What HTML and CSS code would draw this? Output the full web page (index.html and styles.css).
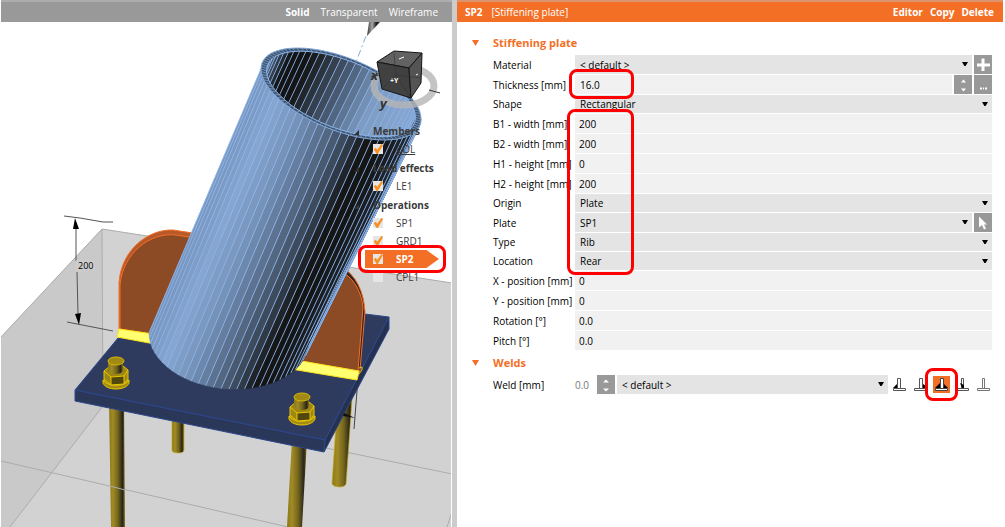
FILE: index.html
```html
<!DOCTYPE html>
<html lang="en">
<head>
<meta charset="utf-8">
<title>Stiffening plate</title>
<link rel="stylesheet" href="styles.css">
</head>
<body>
<div class="app">
  <section class="view">
    <header class="bar view-bar">
      <button class="bar-button strong" type="button">Solid</button>
      <button class="bar-button" type="button">Transparent</button>
      <button class="bar-button" type="button">Wireframe</button>
    </header>
    <div class="scene">
      <svg class="scene-art" viewBox="0 22 452 505" preserveAspectRatio="xMinYMin slice" aria-label="3D model">
        <defs>
          <linearGradient id="rod"><stop offset="0" stop-color="#8c7818"/><stop offset=".25" stop-color="#a18b25"/><stop offset=".55" stop-color="#75661c"/><stop offset=".85" stop-color="#26241c"/><stop offset="1" stop-color="#8a7414"/></linearGradient>
          <linearGradient id="cone"><stop offset="0" stop-color="#333"/><stop offset=".4" stop-color="#aaa"/><stop offset=".7" stop-color="#222"/></linearGradient>
          <g id="bolt">
            <path d="M-13 5v3c3 8 23 8 26 0V5z" fill="#a48c14" stroke="#e8c500"/>
            <path d="M-13 5c3 7 23 7 26 0" fill="none" stroke="#e8c500"/>
            <path d="M-12-4L-6-9H7L12-5V4L8 9L-5 10L-12 4z" fill="#9d8714" stroke="#e8c500"/>
            <path d="M-5 2L8 1V9L-5 10z" fill="#52480e" stroke="#e8c500"/>
            <path d="M-12-4L-5 2M8 1L12-5" fill="none" stroke="#e8c500"/>
            <path d="M-8-14V-4C-5 0 5 0 7-4V-14z" fill="url(#rod)"/>
            <ellipse cx="0" cy="-14" rx="8" ry="4" fill="#a08a14" stroke="#d5b60a"/>
          </g>
        </defs>
        <path d="M102 229L452 283V527H1V337z" fill="#d2d2d2"/>
        <path d="M102 229L103 406L10 527H1V337z" fill="#c9c9c9"/>
        <path d="M1 337L102 229L452 283M102 229L103 406L10 527M1 461L240 516L288 527M326 448L452 474M452 512L447 527" fill="none" stroke="#acacac"/>
        <path d="M172 415V450Q172 453 178 453Q184 453 184 450V415z" fill="url(#rod)" stroke="#c7a90e" stroke-width=".6"/>
        <path d="M337 410L332 484Q334 487 339 487Q345 487 346 484L353 385z" fill="url(#rod)" stroke="#c7a90e" stroke-width=".6"/>
        <path d="M109 400L111 527H125L124 400z" fill="url(#rod)"/>
        <path d="M292 440L287 527H302L307 440z" fill="url(#rod)"/>
        <path d="M110 486L125 490" stroke="#acacac"/>
        <path d="M358 378L354 429" stroke="#444"/>
        <path d="M75 390L118 338L365 314L389 317L325 440z" fill="#2e3b5f" stroke="#2c478c"/>
        <path d="M75 390L325 440L324 452L75 401z" fill="#2b3759" stroke="#2c478c"/>
        <path d="M325 440L389 317V329L324 452z" fill="#263150" stroke="#2c478c"/>
        <path d="M343 416L355 418L344 413z" fill="#111"/>
        <path d="M119 329V283C121 250 148 229 173 230L240 240L220 345z" fill="#b8592a" stroke="#f36f26"/>
        <path d="M120 329V285C123 253 150 232 176 235L240 245L220 345z" fill="#8c4a25" stroke="#f36f26"/>
        <path d="M119 329L160 335V345L117 337z" fill="#ffff70" stroke="#ffe21c"/>
        <path d="M340 266C356 274 364 292 365 312L360 370L357 378L358 330C363 305 361 290 343 273z" fill="#302520" stroke="#f36f26"/>
        <path d="M342 272C356 279 362 296 363 307L358 371L290 360z" fill="#8c4a25" stroke="#f36f26"/>
        <path d="M290 359L359 371L357 380L285 368z" fill="#ffff70" stroke="#ffe21c"/>
        <path d="M359 368L362 367V370L359 374" fill="none" stroke="#e8c500"/>
        <g id="tube"></g>
        <use href="#bolt" x="116" y="375"/>
        <use href="#bolt" x="302" y="411"/>
        <path d="M64 216L80 218L103 222H113M67 322L113 331M76 228V261M77 272L78 314" fill="none" stroke="#555"/>
        <path d="M75 218L73 229H79zM75 314L81 313L79 325z" fill="#000"/>
        <rect x="76" y="260" width="19" height="11" fill="#ccc"/>
        <text class="dimension" x="78" y="269">200</text>
        <path d="M366 36L356 62" stroke="#86aede" stroke-dasharray="7 3 2 3"/>
        <path d="M369 22H380L367 36z" fill="url(#cone)"/>
        <ellipse cx="404" cy="86" rx="30" ry="19" fill="none" stroke="#b5b5b5" stroke-opacity=".8" stroke-width="7"/>
        <path d="M429 90L440 93M371 77L379 75" stroke="#333"/>
        <text class="axis" x="371" y="80">x</text><text class="axis" x="380" y="108">y</text>
        <g stroke="#151515" stroke-linejoin="round"><path d="M377 62L394 51L422 53L409 68z" fill="#626262"/><path d="M377 62L409 68L411 98L382 89z" fill="#414141"/><path d="M409 68L422 53L421 83L411 98z" fill="#545454"/></g>
        <path d="M382 89L396 75L411 98M396 75L394 53M396 75L421 78" fill="none" stroke="#303030" stroke-width=".6"/>
        <path d="M399 59L404 57M416 75L418 74" stroke="#fff"/>
        <text class="face" x="390" y="83">+Y</text>
      </svg>
      <nav class="tree" aria-label="Model tree">
        <div class="tree-group">
          <h3 class="tree-title">Members</h3>
          <label class="node"><input class="tick" type="checkbox" checked><span class="current">COL</span></label>
        </div>
        <div class="tree-group">
          <h3 class="tree-title">Load effects</h3>
          <label class="node"><input class="tick" type="checkbox" checked><span>LE1</span></label>
        </div>
        <div class="tree-group">
          <h3 class="tree-title">Operations</h3>
          <label class="node"><input class="tick" type="checkbox" checked><span>SP1</span></label>
          <label class="node"><input class="tick" type="checkbox" checked><span>GRD1</span></label>
          <label class="node selected"><input class="tick" type="checkbox" checked><span>SP2</span><i class="mark mark-node"></i></label>
          <label class="node"><input class="tick" type="checkbox"><span>CPL1</span></label>
        </div>
      </nav>
    </div>
  </section>
  <div class="splitter"></div>
  <section class="panel">
    <header class="bar panel-bar">
      <strong>SP2</strong><span class="kind">[Stiffening plate]</span>
      <button class="bar-button strong" type="button">Editor</button>
      <button class="bar-button strong" type="button">Copy</button>
      <button class="bar-button strong" type="button">Delete</button>
    </header>
    <form class="form">
      <h2 class="heading">Stiffening plate</h2>
      <div class="row"><label class="name" for="material">Material</label><span class="combo"><select class="field" id="material"><option>&lt; default &gt;</option></select></span><button class="tool" type="button" aria-label="Add material"><svg class="icon" viewBox="0 0 18 18"><path d="M9 3V15.500M3 9.500H16" stroke="#fff" stroke-width="3"/></svg></button></div>
      <div class="row marked"><label class="name" for="thickness">Thickness [mm]</label><input class="field inset" id="thickness" value="16.0"><button class="tool" type="button" aria-label="Step thickness"><svg class="icon" viewBox="0 0 18 18"><path d="M7 7L9.500 4L12 7zM7 13L9.500 16L12 13z" fill="#fff"/></svg></button><button class="tool" type="button" aria-label="More"><svg class="icon" viewBox="0 0 18 18"><path d="M6 13h2M9 13h1M11 13h2" stroke="#fff" stroke-width="2"/></svg></button><i class="mark mark-thickness"></i></div>
      <div class="row low"><label class="name" for="shape">Shape</label><span class="combo"><select class="field" id="shape"><option>Rectangular</option></select></span></div>
      <div class="marked">
        <div class="row"><label class="name" for="b1">B1 - width [mm]</label><input class="field" id="b1" value="200"></div>
        <div class="row"><label class="name" for="b2">B2 - width [mm]</label><input class="field" id="b2" value="200"></div>
        <div class="row"><label class="name" for="h1">H1 - height [mm]</label><input class="field" id="h1" value="0"></div>
        <div class="row"><label class="name" for="h2">H2 - height [mm]</label><input class="field" id="h2" value="200"></div>
        <div class="row low"><label class="name" for="origin">Origin</label><span class="combo"><select class="field" id="origin"><option>Plate</option></select></span></div>
        <div class="row"><label class="name" for="plate">Plate</label><span class="combo"><select class="field" id="plate"><option>SP1</option></select></span><button class="tool" type="button" aria-label="Pick plate"><svg class="icon" viewBox="0 0 18 18"><path d="M5 3V14L8 11.500L10 16L12 15L10 11H13z" fill="#fff"/></svg></button></div>
        <div class="row low"><label class="name" for="type">Type</label><span class="combo"><select class="field" id="type"><option>Rib</option></select></span></div>
        <div class="row low"><label class="name" for="location">Location</label><span class="combo"><select class="field" id="location"><option>Rear</option></select></span></div>
        <i class="mark mark-values"></i>
      </div>
      <div class="row"><label class="name" for="xpos">X - position [mm]</label><input class="field" id="xpos" value="0"></div>
      <div class="row"><label class="name" for="ypos">Y - position [mm]</label><input class="field" id="ypos" value="0"></div>
      <div class="row"><label class="name" for="rotation">Rotation [°]</label><input class="field" id="rotation" value="0.0"></div>
      <div class="row"><label class="name" for="pitch">Pitch [°]</label><input class="field" id="pitch" value="0.0"></div>
      <h2 class="heading second">Welds</h2>
      <div class="row">
        <label class="name" for="weld">Weld [mm]</label><output class="size">0.0</output>
        <button class="tool" type="button" aria-label="Step weld size"><svg class="icon" viewBox="0 0 18 18"><path d="M6 7L9 4L12 7zM6 13L9 16L12 13z" fill="#fff"/></svg></button>
        <span class="combo"><select class="field" id="weld"><option>&lt; default &gt;</option></select></span>
        <div class="welds">
          <button class="weld" type="button" aria-label="Left fillet"><svg class="icon" viewBox="0 0 17 17"><path d="M2 12L6 8V12z" fill="#000"/><path d="M6.500 2.500h3v10h-3zM2.500 12.500h12v2h-12z" fill="#fff" stroke="#555"/></svg></button>
          <button class="weld" type="button" aria-label="Right fillet"><svg class="icon" viewBox="0 0 17 17"><path d="M11 12V8L14 10V12z" fill="#000"/><path d="M7.500 2.500h3v10h-3zM2.500 12.500h12v2h-12z" fill="#fff" stroke="#555"/></svg></button>
          <button class="weld chosen" type="button" aria-label="Double fillet" aria-pressed="true"><svg class="icon" viewBox="0 0 17 17"><path d="M2 12L7 7H10L15 12z" fill="#000"/><path d="M7.500 2.500h3v10h-3zM2.500 12.500h12v2h-12z" fill="#fff" stroke="#444"/></svg><i class="mark mark-weld"></i></button>
          <button class="weld" type="button" aria-label="Butt weld"><svg class="icon" viewBox="0 0 17 17"><path d="M7.500 2.500h2v10h-2zM2.500 12.500h12v2h-12z" fill="#fff" stroke="#555"/><path d="M6 7L10 9V12H8z" fill="#000"/></svg></button>
          <button class="weld" type="button" aria-label="No weld"><svg class="icon" viewBox="0 0 17 17"><path d="M7.500 2.500h2v10h-2zM2.500 12.500h12v2h-12z" fill="#fff" stroke="#777"/></svg></button>
        </div>
      </div>
    </form>
  </section>
</div>
<script src="tube.js"></script>
</body>
</html>
```

FILE: styles.css
```css
* { box-sizing: border-box; }
body { margin: 0; background: #fff; color: #000; font: 11px/18px "Open Sans", "Noto Sans", sans-serif; }
button, input, select { font: inherit; color: inherit; border: 0; padding: 0; margin: 0; background: none; border-radius: 0; }
h2, h3 { margin: 0; }
.app { display: grid; grid-template-columns: 452px 5px minmax(0, 1fr); min-height: 100vh; padding-right: 2px; }
.view { display: flex; flex-direction: column; min-width: 0; padding-left: 1px; }
.bar { display: flex; align-items: center; height: 22px; color: #fff; font-size: 10px; }
.bar-button.strong, .strong { font-weight: 700; }
.view-bar { justify-content: flex-end; gap: 11px; padding-right: 14px; background: #999; border-top: 2px solid #adadad; }
.panel-bar { gap: 7px; padding: 0 9px 0 8px; background: #f36f26; border-top: 2px solid #dc946e; }
.kind { margin: 0 auto 0 2px; }
.scene { position: relative; flex: 1; min-height: 505px; overflow: hidden; }
.scene-art { display: block; width: 100%; height: 100%; margin-left: -1px; }
.dimension { font: 9px "Open Sans", sans-serif; }
.axis { font: italic bold 13px "Open Sans", sans-serif; fill: #333; }
.face { font: bold 7px "Open Sans", sans-serif; fill: #fff; }
.tree { position: absolute; top: 100px; right: 13px; width: 74px; color: #3b3b3b; }
.tree-group { margin-bottom: 1px; }
.tree-title { position: relative; height: 18px; padding-left: 8px; font-size: 10px; line-height: 18px; white-space: nowrap; }
.tree-title::before { content: ""; position: absolute; left: -11px; top: 8px; width: 5px; height: 5px; background: #333; clip-path: polygon(100% 0, 100% 100%, 0 100%); }
.node { position: relative; display: flex; align-items: center; gap: 13px; height: 18px; padding-left: 8px; font-size: 10px; }
.current { text-decoration: underline; }
.selected { color: #fff; font-weight: 700; }
.selected::before { content: ""; position: absolute; inset: 0; background: #f36f26; clip-path: polygon(0 0, 83% 0, 100% 50%, 83% 100%, 0 100%); }
.selected span, .selected .tick { position: relative; }
.tick { appearance: none; width: 10px; height: 10px; background: #e6e6e6; }
.tick:checked::before { content: ""; display: block; width: 10px; height: 10px; background: #f7901e; clip-path: polygon(8% 52%, 28% 38%, 42% 58%, 85% 0, 100% 10%, 48% 100%, 36% 100%); }
.splitter { background: #ccc; }
.panel { min-width: 0; }
.form { padding: 11px 11px 0 36px; }
.heading { position: relative; height: 22px; color: #f36f26; font-size: 11px; line-height: 20px; }
.heading::before { content: ""; position: absolute; left: -21px; top: 7px; width: 7px; height: 6px; background: #f36f26; clip-path: polygon(0 0, 100% 0, 50% 100%); }
.second { margin-top: 2px; }
.row { display: flex; align-items: center; height: 20px; gap: 2px; padding-bottom: 1px; font-size: 10px; }
.low { height: 19px; }
.name { flex: 0 0 80px; white-space: nowrap; }
.combo { position: relative; flex: 1; display: flex; min-width: 0; height: 100%; }
.combo::after { content: ""; position: absolute; right: 4px; top: 7px; width: 6px; height: 4px; background: #000; clip-path: polygon(0 0, 100% 0, 60% 100%, 40% 100%); pointer-events: none; }
.field { flex: 1; width: 0; min-width: 0; height: 100%; padding-left: 4px; background: #f1f1f1; }
.inset { padding-left: 5px; }
.combo .field { appearance: none; padding-left: 5px; background: #e4e4e4; }
.tool { flex: 0 0 18px; height: 100%; background: #999; }
.icon { display: block; width: 100%; height: 100%; }
.size { flex: 0 0 20px; color: #777; }
.welds { display: flex; gap: 4px; margin-left: 1px; }
.weld { position: relative; width: 17px; height: 17px; }
.chosen { background: #f36f26; }
.marked { position: relative; }
.mark { position: absolute; z-index: 1; border: 3px solid #f00; border-radius: 8px; pointer-events: none; }
.mark-node { inset: -5px -7px; }
.mark-thickness { left: 76px; top: -6px; width: 65px; height: 30px; }
.mark-values { left: 74px; top: -5px; width: 67px; height: 166px; }
.mark-weld { inset: -8px; }
```

FILE: tube.js
```javascript
// Draws the hollow tube as a fan of shaded strips between two ellipses.
const svgNs = "http://www.w3.org/2000/svg";
const tube = document.getElementById("tube");
const strips = 64;
const outer = { x: 341, y: 94, a: 80, c: 25, b: 38.6, k: 1 };
const inner = { ...outer, k: 0.93 };
const base = { x: 229, y: 337, a: 80, c: 4, b: 52, k: 1 };
const outside = [[-1, 120, 150, 190], [-0.8, 134, 166, 209], [-0.5, 116, 145, 184], [-0.15, 84, 103, 130], [0.1, 56, 68, 84], [0.3, 22, 23, 24], [0.5, 20, 20, 20], [0.75, 28, 33, 40], [1, 40, 52, 68]];
const inside = [[-1, 90, 115, 145], [-0.85, 60, 74, 90], [-0.66, 20, 20, 20], [-0.38, 20, 20, 20], [-0.1, 48, 57, 68], [0.2, 76, 95, 120], [0.6, 126, 156, 196], [1, 134, 166, 209]];

function at(e, t) {
  const cos = Math.cos(t), sin = Math.sin(t);
  return [(e.x + e.k * e.a * cos).toFixed(1), (e.y + e.k * (e.c * cos + e.b * sin)).toFixed(1)];
}
function shade(stops, u) {
  let i = 1;
  while (i < stops.length - 1 && u > stops[i][0]) i++;
  const p = stops[i - 1], q = stops[i], f = (u - p[0]) / (q[0] - p[0]);
  return `rgb(${[1, 2, 3].map(n => Math.round(p[n] + (q[n] - p[n]) * f)).join(",")})`;
}
function add(parent, tag, attrs) {
  const el = document.createElementNS(svgNs, tag);
  for (const key in attrs) el.setAttribute(key, attrs[key]);
  return parent.appendChild(el);
}
function ring(e) {
  const pts = [];
  for (let i = 0; i < 96; i++) pts.push(at(e, i * Math.PI / 48));
  return "M" + pts.join("L") + "z";
}
// Paints the strips of one side, then the thin seams between them.
function wall(parent, upper, lower, from, to, colours) {
  for (let i = from; i < to; i++) {
    const t = i * 2 * Math.PI / strips, n = (i + 1) * 2 * Math.PI / strips;
    const fill = shade(colours, Math.cos((t + n) / 2));
    add(parent, "path", { d: `M${at(upper, t)}L${at(upper, n)}L${at(lower, n)}L${at(lower, t)}z`, fill, stroke: fill, "stroke-width": 0.5 });
  }
  for (let i = from; i <= to; i++) {
    const t = i * 2 * Math.PI / strips;
    add(parent, "path", { d: `M${at(upper, t)}L${at(lower, t)}`, stroke: "#8db6ec", "stroke-width": 0.9 });
  }
}

wall(tube, outer, base, 0, 32, outside);
add(tube, "path", { d: ring(outer), fill: "#41566e", stroke: "#7fa8dc" });
const teeth = 96;
for (let i = 0; i < teeth; i++) {
  const t = i * 2 * Math.PI / teeth;
  add(tube, "path", { d: `M${at(outer, t)}L${at(inner, t)}`, stroke: "#7fa8dc", "stroke-width": 0.7 });
}
const clip = add(tube, "clipPath", { id: "bore" });
add(clip, "path", { d: ring(inner) });
const bore = add(tube, "g", { "clip-path": "url(#bore)" });
wall(bore, inner, { ...base, k: 0.93 }, 29, 64, inside);
add(tube, "path", { d: ring(inner), fill: "none", stroke: "#8db6ec" });
```
